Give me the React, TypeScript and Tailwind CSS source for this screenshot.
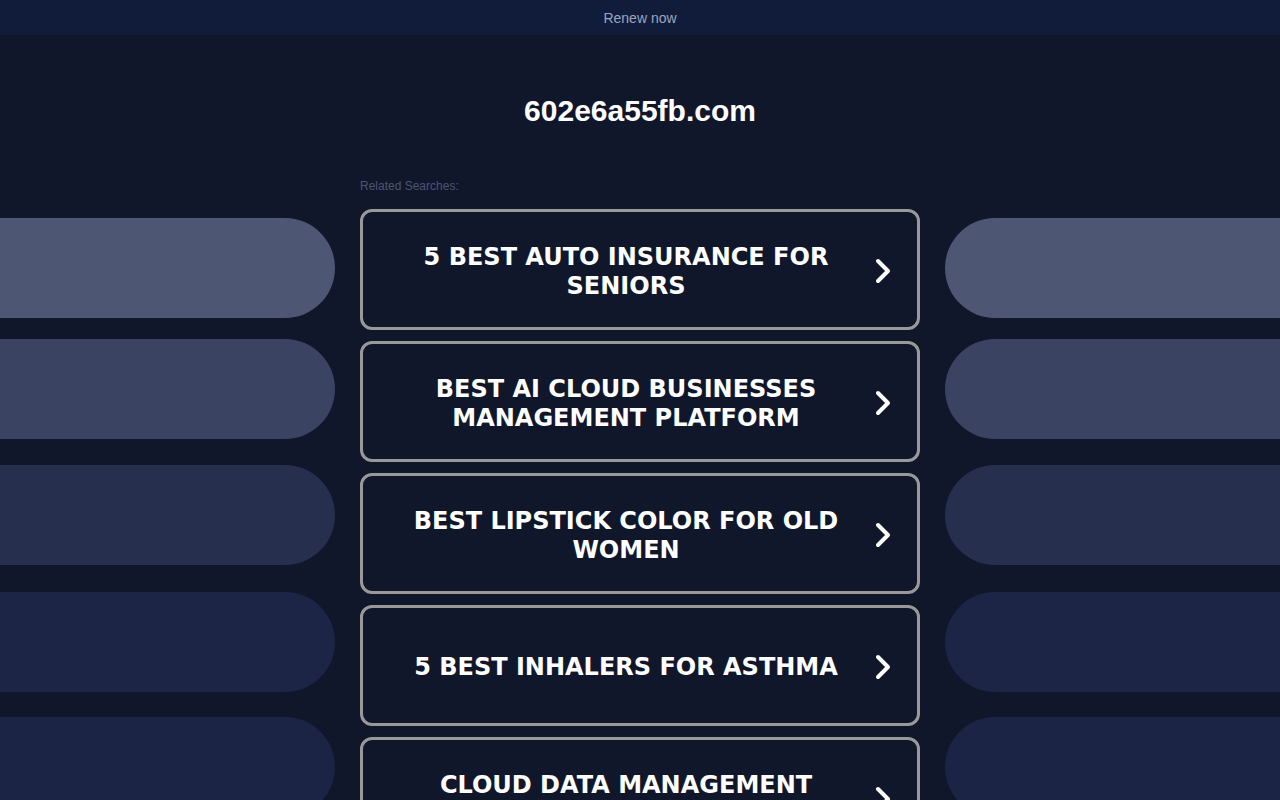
import React from "react";

const searches = [
  "5 BEST AUTO INSURANCE FOR SENIORS",
  "BEST AI CLOUD BUSINESSES MANAGEMENT PLATFORM",
  "BEST LIPSTICK COLOR FOR OLD WOMEN",
  "5 BEST INHALERS FOR ASTHMA",
  "CLOUD DATA MANAGEMENT SOLUTIONS",
];

// decorative side pills: top margin + fill
const pills = [
  { mt: "mt-[9px]", bg: "bg-[#4d5672]" },
  { mt: "mt-[21px]", bg: "bg-[#3a4361]" },
  { mt: "mt-[26px]", bg: "bg-[#262f4d]" },
  { mt: "mt-[27px]", bg: "bg-[#1c2546]" },
  { mt: "mt-[25px]", bg: "bg-[#1b2444]" },
];

function Chevron() {
  return (
    <svg width="18" height="28" viewBox="0 0 18 28" className="shrink-0">
      <path
        d="M4 4 L14 14 L4 24"
        fill="none"
        stroke="white"
        strokeWidth="4"
        strokeLinecap="round"
        strokeLinejoin="round"
      />
    </svg>
  );
}

function SideColumn({ side }: { side: "left" | "right" }) {
  return (
    <div className="flex w-[335px] shrink-0 flex-col">
      {pills.map((p, i) => (
        <div
          key={i}
          className={`${p.mt} ${p.bg} h-[100px] w-full ${
            side === "left" ? "rounded-r-full" : "rounded-l-full"
          }`}
        />
      ))}
    </div>
  );
}

export default function App() {
  return (
    <div
      className="h-[800px] w-full overflow-hidden bg-[#11172b]"
      style={{ fontFamily: '"Liberation Sans", Arial, sans-serif' }}
    >
      <div className="flex h-[35px] items-center justify-center bg-[#101c39] pt-[2px]">
        <a className="text-[14px] text-[#9aa6c0]" href="#">
          Renew now
        </a>
      </div>

      <h1 className="mt-[59px] text-center text-[30px] font-bold leading-[34px] text-white">
        602e6a55fb.com
      </h1>

      <div className="mx-auto mt-[51px] w-[560px] text-[12px] leading-[14px] text-[#4b5573]">
        Related Searches:
      </div>

      <div className="mt-[16px] flex gap-[25px]">
        <SideColumn side="left" />

        <div className="flex w-[560px] shrink-0 flex-col gap-[11px]">
          {searches.map((s) => (
            <a
              key={s}
              href="#"
              className="flex h-[121px] items-center rounded-[12px] border-[3px] border-[#999999] pl-[17px] pr-[25px] pt-[4px]"
            >
              <span
                className="flex-1 text-center text-[24px] font-bold leading-[29px] text-white"
                style={{ fontFamily: '"DejaVu Sans", Verdana, sans-serif' }}
              >
                {s}
              </span>
              <span className="ml-[2px] -mt-[2px]">
                <Chevron />
              </span>
            </a>
          ))}
        </div>

        <SideColumn side="right" />
      </div>
    </div>
  );
}
